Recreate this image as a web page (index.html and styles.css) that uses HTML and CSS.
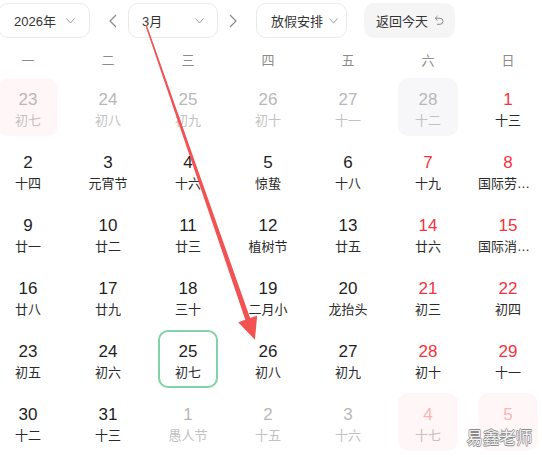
FILE: index.html
```html
<!DOCTYPE html>
<html lang="zh">
<head>
<meta charset="utf-8">
<link rel="stylesheet" href="styles.css">
</head>
<body>
<div class="page">
  <div class="toolbar">
    <div class="sel year"><span>2026年</span><svg class="chev" width="9" height="6" viewBox="0 0 9 6"><polyline points="0.5,0.5 4.5,5 8.5,0.5"/></svg></div>
    <div class="nav prev"><svg width="8" height="14" viewBox="0 0 8 14"><polyline points="7,1 1,7 7,13"/></svg></div>
    <div class="sel month"><span>3月</span><svg class="chev" width="9" height="6" viewBox="0 0 9 6"><polyline points="0.5,0.5 4.5,5 8.5,0.5"/></svg></div>
    <div class="nav next"><svg width="8" height="14" viewBox="0 0 8 14"><polyline points="1,1 7,7 1,13"/></svg></div>
    <div class="sel holiday"><span>放假安排</span><svg class="chev" width="9" height="6" viewBox="0 0 9 6"><polyline points="0.5,0.5 4.5,5 8.5,0.5"/></svg></div>
    <div class="today"><span>返回今天</span><svg class="back" width="10" height="11" viewBox="0 0 10 11"><path d="M3.5 1 L1.2 3.3 L3.5 5.6 M1.2 3.3 H6 A3 3 0 0 1 6 9.3 H3"/></svg></div>
  </div>

  <div class="weekdays">
    <span>一</span><span>二</span><span>三</span><span>四</span><span>五</span><span>六</span><span>日</span>
  </div>

  <div class="grid">
    <div class="cell out rest"><b>23</b><i>初七</i></div>
    <div class="cell out"><b>24</b><i>初八</i></div>
    <div class="cell out"><b>25</b><i>初九</i></div>
    <div class="cell out"><b>26</b><i>初十</i></div>
    <div class="cell out"><b>27</b><i>十一</i></div>
    <div class="cell out work"><b>28</b><i>十二</i></div>
    <div class="cell red"><b>1</b><i>十三</i></div>

    <div class="cell"><b>2</b><i>十四</i></div>
    <div class="cell"><b>3</b><i>元宵节</i></div>
    <div class="cell"><b>4</b><i>十六</i></div>
    <div class="cell"><b>5</b><i>惊蛰</i></div>
    <div class="cell"><b>6</b><i>十八</i></div>
    <div class="cell red"><b>7</b><i>十九</i></div>
    <div class="cell red"><b>8</b><i>国际劳动妇女节</i></div>

    <div class="cell"><b>9</b><i>廿一</i></div>
    <div class="cell"><b>10</b><i>廿二</i></div>
    <div class="cell"><b>11</b><i>廿三</i></div>
    <div class="cell"><b>12</b><i>植树节</i></div>
    <div class="cell"><b>13</b><i>廿五</i></div>
    <div class="cell red"><b>14</b><i>廿六</i></div>
    <div class="cell red"><b>15</b><i>国际消费者权益日</i></div>

    <div class="cell"><b>16</b><i>廿八</i></div>
    <div class="cell"><b>17</b><i>廿九</i></div>
    <div class="cell"><b>18</b><i>三十</i></div>
    <div class="cell"><b>19</b><i>二月小</i></div>
    <div class="cell"><b>20</b><i>龙抬头</i></div>
    <div class="cell red"><b>21</b><i>初三</i></div>
    <div class="cell red"><b>22</b><i>初四</i></div>

    <div class="cell"><b>23</b><i>初五</i></div>
    <div class="cell"><b>24</b><i>初六</i></div>
    <div class="cell selected"><b>25</b><i>初七</i></div>
    <div class="cell"><b>26</b><i>初八</i></div>
    <div class="cell"><b>27</b><i>初九</i></div>
    <div class="cell red"><b>28</b><i>初十</i></div>
    <div class="cell red"><b>29</b><i>十一</i></div>

    <div class="cell"><b>30</b><i>十二</i></div>
    <div class="cell"><b>31</b><i>十三</i></div>
    <div class="cell out"><b>1</b><i>愚人节</i></div>
    <div class="cell out"><b>2</b><i>十五</i></div>
    <div class="cell out"><b>3</b><i>十六</i></div>
    <div class="cell out red rest"><b>4</b><i>十七</i></div>
    <div class="cell out red rest"><b>5</b><i>十八</i></div>
  </div>

  <svg class="annot" width="542" height="457" viewBox="0 0 542 457">
    <polygon points="145.3,25.2 245.3,319.7 238.2,322.2 254.9,339.7 257.2,315.6 250.1,318.1 146.7,24.8"/>
  </svg>
  <div class="watermark">易鑫老师</div>
</div>
</body>
</html>
```

FILE: styles.css
```css
* { box-sizing: border-box; }
html, body { margin: 0; padding: 0; background: #fff; }
body {
  font-family: "Liberation Sans", "Noto Sans CJK SC", sans-serif;
  color: #222;
  overflow: hidden;
  width: 542px;
  height: 457px;
}
.page {
  position: relative;
  width: 542px;
  height: 457px;
}
.toolbar {
  display: flex;
  align-items: center;
  margin-left: -2px;
  padding-top: 3px;
  height: 38px;
}
.sel {
  display: flex;
  align-items: center;
  justify-content: space-between;
  height: 35px;
  border: 1px solid #ebebeb;
  border-radius: 10px;
  font-size: 13px;
  color: #333;
  background: #fff;
}
.sel.year { width: 92px; padding: 0 14px 0 15px; }
.sel.month { width: 90px; padding: 0 13px 0 13px; }
.sel.holiday { width: 91px; padding: 0 8px 0 14px; gap: 6px; }
.chev polyline { fill: none; stroke: #9a9a9a; stroke-width: 1; }
.nav {
  width: 38px;
  height: 35px;
  display: flex;
  align-items: center;
  justify-content: center;
}
.nav.prev { padding-left: 8px; }
.nav.next { padding-right: 8px; }
.nav polyline { fill: none; stroke: #8a8a8a; stroke-width: 1.2; }
.today {
  margin-left: 17px;
  width: 91px;
  height: 35px;
  border-radius: 10px;
  background: #f5f5f5;
  display: flex;
  align-items: center;
  padding: 0 11px 0 12px;
  justify-content: space-between;
  font-size: 13px;
  color: #333;
}
.back path { fill: none; stroke: #8a8a8a; stroke-width: 1; }

.weekdays {
  display: grid;
  grid-template-columns: repeat(7, 60px);
  column-gap: 20px;
  margin-left: -2px;
  margin-top: 13px;
  height: 20px;
  line-height: 20px;
  font-size: 13px;
  color: #8c8c8c;
  text-align: center;
}
.grid {
  display: grid;
  grid-template-columns: repeat(7, 60px);
  grid-auto-rows: 58px;
  column-gap: 20px;
  row-gap: 5px;
  margin-left: -2px;
  margin-top: 7px;
}
.cell {
  display: flex;
  flex-direction: column;
  align-items: center;
  padding-top: 11px;
  border-radius: 10px;
  text-align: center;
  min-width: 0;
}
.cell b {
  font-weight: normal;
  font-size: 17px;
  line-height: 22px;
  height: 22px;
  color: #1f1f1f;
}
.cell i {
  font-style: normal;
  font-size: 13px;
  line-height: 20px;
  color: #2a2a2a;
  max-width: 60px;
  white-space: nowrap;
  overflow: hidden;
  text-overflow: ellipsis;
}
.cell.red b { color: #f5333f; }
.cell.out b { color: #b8b8b8; }
.cell.out i { color: #c2c2c2; }
.cell.out.red b { color: #fbb3b6; }
.cell.rest { background: #fff7f7; }
.cell.work { background: #f7f7f9; }
.cell.selected {
  border: 2px solid #7fd3a6;
  padding-top: 9px;
}

.annot {
  position: absolute;
  left: 0;
  top: 0;
  pointer-events: none;
}
.annot polygon { fill: #f25252; }

.watermark {
  position: absolute;
  left: 466px;
  top: 425px;
  font-family: "Noto Sans CJK SC", sans-serif;
  font-size: 17px;
  line-height: 24px;
  letter-spacing: -0.5px;
  color: #f2f2f2;
  text-shadow: 0.6px 0 0 #8a8a8a, -0.6px 0 0 #8a8a8a, 0 0.6px 0 #8a8a8a, 0 -0.6px 0 #8a8a8a;
}
```
